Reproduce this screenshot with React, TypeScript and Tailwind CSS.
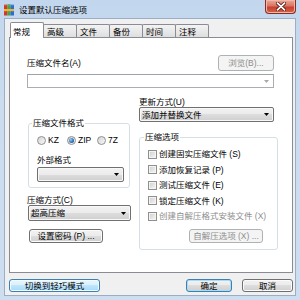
import React from "react";

const GRAD_BTN =
  "bg-[linear-gradient(to_bottom,#f2f2f2_0%,#ebebeb_50%,#dddddd_50%,#cfcfcf_100%)]";

function Arrow({ color = "#000" }: { color?: string }) {
  return (
    <svg width="5" height="3" viewBox="0 0 5 3">
      <path d="M0 0H5L2.5 3Z" fill={color} />
    </svg>
  );
}

function Dropdown({ w, h, text }: { w: string; h: string; text?: string }) {
  return (
    <div
      className={`${w} ${h} border border-[#707070] rounded-[2px] ${GRAD_BTN} flex items-center justify-between pl-[2px] pr-[4px] shadow-[inset_0_0_0_1px_#f8f8f8]`}
    >
      <span className="whitespace-nowrap">{text ?? ""}</span>
      <Arrow />
    </div>
  );
}

function Btn({
  w,
  h,
  text,
  disabled,
  variant,
}: {
  w: string;
  h: string;
  text: string;
  disabled?: boolean;
  variant?: "hover" | "default";
}) {
  let cls = `border border-[#707070] ${GRAD_BTN} shadow-[inset_0_0_0_1px_#fbfbfb] text-black`;
  if (disabled)
    cls = "border border-[#adb2b5] bg-[#f4f4f4] text-[#8d8d8d]";
  if (variant === "hover")
    cls =
      "border border-[#3c7fb1] bg-[linear-gradient(to_bottom,#eaf6fd_0%,#d9f0fc_50%,#bee6fd_50%,#a7d9f5_100%)] shadow-[inset_0_0_0_1px_#f4fbff] text-black";
  if (variant === "default")
    cls = `border border-[#3c7fb1] ${GRAD_BTN} shadow-[inset_0_0_0_1px_#a9dcf6] text-black`;
  return (
    <div
      className={`${w} ${h} ${cls} rounded-[3px] flex items-center justify-center whitespace-nowrap`}
    >
      {text}
    </div>
  );
}

function Radio({ checked }: { checked?: boolean }) {
  return (
    <div className="w-[9px] h-[9px] rounded-full border border-[#8e8f8f] bg-[linear-gradient(135deg,#d4d4d4,#f9f9f9)] flex items-center justify-center shrink-0">
      {checked && (
        <div className="w-[5px] h-[5px] rounded-full bg-[radial-gradient(circle_at_35%_35%,#8fd0fb,#1f5aa8_70%,#123c7a)]" />
      )}
    </div>
  );
}

function Check() {
  return (
    <div className="w-[9px] h-[9px] border border-[#8e8f8f] bg-[linear-gradient(135deg,#cdcdcd,#f7f7f7)] shadow-[inset_0_0_0_1px_#f4f4f4] shrink-0" />
  );
}

function AppIcon() {
  return (
    <svg width="10" height="12" viewBox="0 0 10 12">
      <rect x="0" y="0.5" width="3.4" height="11" fill="#d9362a" />
      <rect x="3.3" y="0" width="3.4" height="11.5" fill="#43a64a" />
      <rect x="6.6" y="0.5" width="3.4" height="11" fill="#2f6cd0" />
      <rect x="0" y="5" width="10" height="2.2" fill="#eab53a" />
      <rect x="0" y="0.5" width="10" height="0.8" fill="#ffffff" opacity="0.35" />
    </svg>
  );
}

function CloseBtn() {
  return (
    <div className="w-[31px] h-[14px] rounded-b-[4px] border border-t-0 border-[#8c2a20] bg-[linear-gradient(to_bottom,#eaa99a_0%,#dc7463_45%,#c8412f_55%,#d0654d_100%)] shadow-[inset_0_0_0_1px_#f0b8a8] flex items-center justify-center">
      <svg width="10" height="9" viewBox="0 0 10 9">
        <path d="M1.5 1.2L8.5 7.8M8.5 1.2L1.5 7.8" stroke="#5a1a14" strokeWidth="3.4" strokeLinecap="round" />
        <path d="M1.5 1.2L8.5 7.8M8.5 1.2L1.5 7.8" stroke="#ffffff" strokeWidth="1.8" strokeLinecap="round" />
      </svg>
    </div>
  );
}

function Tab({ label, selected, first }: { label: string; selected?: boolean; first?: boolean }) {
  if (selected)
    return (
      <div className="relative z-10 w-[34px] h-[16px] -mb-[1px] border border-b-0 border-[#898c95] bg-white pl-[2px] pt-[4px] rounded-t-[2px]">
        {label}
      </div>
    );
  return (
    <div
      className={`${first ? "" : "-ml-[1px]"} w-[34px] h-[13px] border border-b-0 border-[#898c95] bg-[linear-gradient(to_bottom,#f3f3f3,#e9e9e9_50%,#dedede)] pl-[3px] pt-[2px] rounded-t-[2px]`}
    >
      {label}
    </div>
  );
}

export default function App() {
  return (
    <div className="w-[300px] h-[300px] overflow-hidden bg-[linear-gradient(to_bottom,#c2d6ed,#cbdcef_35%,#cddef1)] flex flex-col font-['Liberation_Sans','Noto_Sans_CJK_SC',sans-serif] text-[8.5px] leading-[10px] text-black">
      {/* title bar */}
      <div className="h-[18px] flex items-start shrink-0">
        <div className="ml-[4px] mt-[4px]">
          <AppIcon />
        </div>
        <div className="ml-[5px] mt-[5px] whitespace-nowrap">设置默认压缩选项</div>
        <div className="ml-auto mr-[4px]">
          <CloseBtn />
        </div>
      </div>

      {/* client area */}
      <div className="ml-[4px] w-[292px] h-[278px] border border-[#9aaec6] bg-[#f0f0f0] flex flex-col shrink-0">
        {/* tabs */}
        <div className="h-[18px] pl-[5px] flex items-end">
          <Tab label="常规" selected first />
          <Tab label="高级" />
          <Tab label="文件" />
          <Tab label="备份" />
          <Tab label="时间" />
          <Tab label="注释" />
        </div>

        {/* panel */}
        <div className="ml-[4px] w-[284px] h-[236px] border border-[#898c95] bg-white pl-[17px] pt-[17px] flex flex-col">
          <div className="w-[247px] h-[16px] flex items-center justify-between">
            <span>压缩文件名(A)</span>
            <Btn w="w-[56px]" h="h-[16px]" text="浏览(B)..." disabled />
          </div>
          <div className="mt-[3px] w-[247px] h-[14px] border border-[#abadb3] border-t-[#9ea3ab] bg-white flex items-center justify-end pr-[4px]">
            <Arrow color="#a8a8a8" />
          </div>

          <div className="flex gap-[8px]">
            {/* left column */}
            <div className="w-[104px] flex flex-col">
              <fieldset className="mt-[30px] ml-[1px] w-[102px] border border-[#d5dfe5] rounded-[3px] pb-[5px] flex flex-col">
                <legend className="ml-[3px] px-[1px] leading-[10px]">压缩文件格式</legend>
                <div className="mt-[7px] pl-[8px] flex h-[10px]">
                  <div className="w-[30px] flex items-center gap-[2px]">
                    <Radio />
                    <span>KZ</span>
                  </div>
                  <div className="w-[30px] flex items-center gap-[2px]">
                    <Radio checked />
                    <span>ZIP</span>
                  </div>
                  <div className="w-[30px] flex items-center gap-[2px]">
                    <Radio />
                    <span>7Z</span>
                  </div>
                </div>
                <div className="mt-[10px] pl-[8px]">外部格式</div>
                <div className="mt-[2px] ml-[8px]">
                  <Dropdown w="w-[87px]" h="h-[15px]" />
                </div>
              </fieldset>
              <div className="mt-[7px]">压缩方式(C)</div>
              <div className="ml-[1px]">
                <Dropdown w="w-[103px]" h="h-[16px]" text="超高压缩" />
              </div>
              <div className="mt-[8px] ml-[2px]">
                <Btn w="w-[74px]" h="h-[14px]" text="设置密码 (P) ..." />
              </div>
            </div>

            {/* right column */}
            <div className="w-[139px] flex flex-col">
              <div className="mt-[9px]">更新方式(U)</div>
              <Dropdown w="w-[135px]" h="h-[15px]" text="添加并替换文件" />
              <fieldset className="mt-[10px] w-[139px] border border-[#d5dfe5] rounded-[3px] pb-[6px] flex flex-col">
                <legend className="ml-[4px] px-[1px] leading-[10px]">压缩选项</legend>
                <div className="mt-[7px] pl-[8px] flex flex-col gap-[5.5px]">
                  <div className="h-[10px] flex items-center gap-[2px]">
                    <Check />
                    <span className="whitespace-nowrap">创建固实压缩文件 (S)</span>
                  </div>
                  <div className="h-[10px] flex items-center gap-[2px]">
                    <Check />
                    <span className="whitespace-nowrap">添加恢复记录 (P)</span>
                  </div>
                  <div className="h-[10px] flex items-center gap-[2px]">
                    <Check />
                    <span className="whitespace-nowrap">测试压缩文件 (E)</span>
                  </div>
                  <div className="h-[10px] flex items-center gap-[2px]">
                    <Check />
                    <span className="whitespace-nowrap">锁定压缩文件 (K)</span>
                  </div>
                  <div className="h-[10px] flex items-center gap-[2px]">
                    <Check />
                    <span className="whitespace-nowrap text-[#8d8d8d]">创建自解压格式安装文件 (X)</span>
                  </div>
                </div>
                <div className="mt-[8px] self-end mr-[14px]">
                  <Btn w="w-[74px]" h="h-[14px]" text="自解压选项 (X) ..." disabled />
                </div>
              </fieldset>
            </div>
          </div>
        </div>

        {/* bottom buttons */}
        <div className="mt-[6px] flex h-[13px]">
          <div className="ml-[4px]">
            <Btn w="w-[91px]" h="h-[13px]" text="切换到轻巧模式" variant="hover" />
          </div>
          <div className="ml-auto">
            <Btn w="w-[46px]" h="h-[13px]" text="确定" variant="default" />
          </div>
          <div className="ml-[10px] mr-[2px]">
            <Btn w="w-[51px]" h="h-[13px]" text="取消" />
          </div>
        </div>
      </div>
    </div>
  );
}
